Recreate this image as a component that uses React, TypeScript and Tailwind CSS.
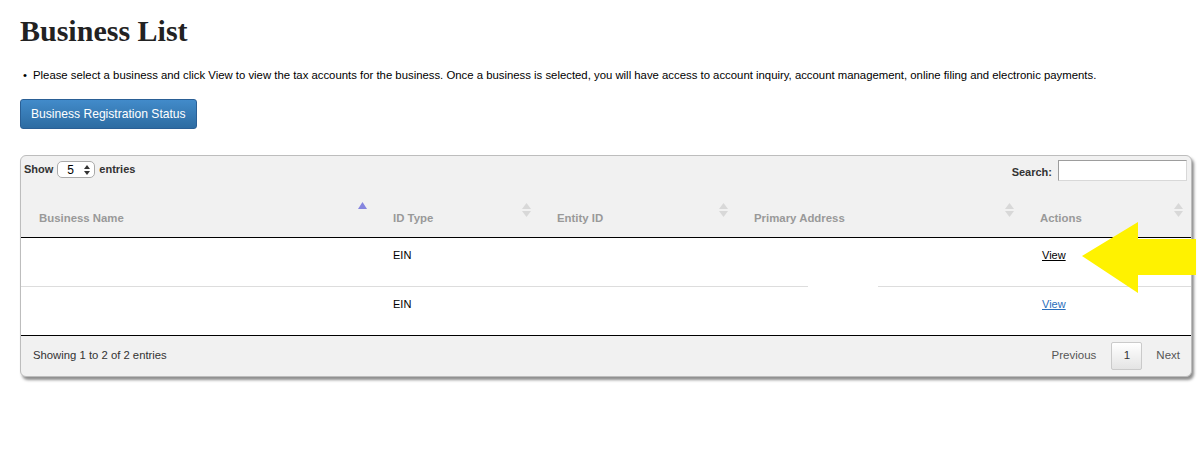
import React from 'react';

const cols = [
  { label: 'Business Name', w: 'w-[354px]', sort: 'asc' },
  { label: 'ID Type', w: 'w-[164px]', sort: 'both' },
  { label: 'Entity ID', w: 'w-[197px]', sort: 'both' },
  { label: 'Primary Address', w: 'w-[286px]', sort: 'both' },
  { label: 'Actions', w: 'w-[169px]', sort: 'both' },
];

const rows = [
  { idType: 'EIN' },
  { idType: 'EIN' },
];

function SortIcon({ kind }: { kind: string }) {
  if (kind === 'asc') {
    return (
      <svg width="9" height="8" viewBox="0 0 9 8" className="absolute right-[8px] top-[10px]">
        <polygon points="4.5,0 9,7 0,7" fill="#8585df" />
      </svg>
    );
  }
  return (
    <svg width="9" height="14" viewBox="0 0 9 14" className="absolute right-[8px] top-[11px]">
      <polygon points="4.5,0 9,6 0,6" fill="#d8d8d8" />
      <polygon points="0,8 9,8 4.5,14" fill="#d8d8d8" />
    </svg>
  );
}

export default function App() {
  return (
    <div className="relative min-h-[450px] bg-white text-[#222] font-['Liberation_Sans',Arial,sans-serif]">
      <div className="px-[20px] pt-[14px]">
        <h1 className="font-['Liberation_Serif','Times_New_Roman',serif] font-bold text-[30px] leading-[34px] text-[#222]">
          Business List
        </h1>

        <ul className="mt-[20px] text-[11.35px] leading-[14px] text-black">
          <li className="flex gap-[6px] pl-[3px]">
            <span>•</span>
            <span>
              Please select a business and click View to view the tax accounts for the business. Once a business is selected, you will have access to account inquiry, account management, online filing and electronic payments.
            </span>
          </li>
        </ul>

        <button className="mt-[17px] h-[30px] px-[10px] rounded-[3px] border border-[#2a5f95] bg-gradient-to-b from-[#428bca] to-[#2d6ca2] text-white text-[12.1px] leading-[15px]">
          Business Registration Status
        </button>

        {/* data table card */}
        <div className="mt-[26px] w-[1172px] rounded-[6px] border border-[#bdbdbd] bg-[#f1f1f1] shadow-[2px_3px_3px_rgba(0,0,0,0.45)] overflow-hidden">
          <div className="flex justify-between items-start pl-[3px] pr-[4px] pt-[4px] h-[36px]">
            <div className="flex items-center gap-[4px] text-[11px] font-bold text-[#333] mt-[1px]">
              <span>Show</span>
              <div className="flex items-center justify-between w-[38px] h-[17px] rounded-[5px] border border-[#aaa] bg-white pl-[9px] pr-[4px] font-normal text-[12px] text-black">
                <span>5</span>
                <svg width="6" height="10" viewBox="0 0 6 10">
                  <polygon points="3,0 6,4 0,4" fill="#333" />
                  <polygon points="0,6 6,6 3,10" fill="#333" />
                </svg>
              </div>
              <span>entries</span>
            </div>
            <div className="flex items-center gap-[6px] text-[11px] font-bold text-[#333]">
              <span className="mt-[3px]">Search:</span>
              <div className="w-[129px] h-[21px] bg-white border border-[#9d9d9d] border-b-[#d8d8d8] border-r-[#d8d8d8]" />
            </div>
          </div>

          <table className="w-full border-collapse table-fixed">
            <thead>
              <tr className="h-[45px]">
                {cols.map((c) => (
                  <th
                    key={c.label}
                    className={`${c.w} relative text-left align-bottom pl-[18px] pb-[9px] text-[11.4px] font-bold text-[#999] border-b border-black`}
                  >
                    {c.label}
                    <SortIcon kind={c.sort} />
                  </th>
                ))}
              </tr>
            </thead>
            <tbody className="bg-white text-[11px] text-black">
              {rows.map((r, i) => (
                <tr key={i} className={`h-[49px] ${i === 0 ? 'border-b border-[#ddd]' : 'border-b border-black'}`}>
                  <td className="align-top pl-[18px] pt-[9px]" />
                  <td className="align-top pl-[18px] pt-[9px]">{r.idType}</td>
                  <td className="align-top pl-[18px] pt-[9px]" />
                  <td className="align-top pl-[18px] pt-[9px]" />
                  <td className="align-top pl-[20px] pt-[9px]">
                    <a href="#" className={`underline ${i === 0 ? 'text-black' : 'text-[#2a6ebb]'}`}>View</a>
                  </td>
                </tr>
              ))}
            </tbody>
          </table>

          <div className="flex justify-between items-center h-[40px] pl-[12px] pr-[11px] text-[11.3px] text-[#333]">
            <span>Showing 1 to 2 of 2 entries</span>
            <div className="flex items-center text-[11.5px] text-[#555]">
              <span className="mr-[15px]">Previous</span>
              <span className="flex items-center justify-center w-[31px] h-[28px] border border-[#cacaca] rounded-[2px] bg-gradient-to-b from-white to-[#e4e4e4] text-[#333]">1</span>
              <span className="ml-[14px]">Next</span>
            </div>
          </div>
        </div>
      </div>

      {/* redaction patch over the row divider */}
      <div className="absolute left-[808px] top-[284px] w-[70px] h-[5px] bg-white" />

      {/* yellow callout arrow */}
      <svg className="absolute left-[1080px] top-[220px]" width="119" height="76" viewBox="0 0 119 76">
        <polygon points="2,36 58,2 58,19 116,19 116,55 58,55 58,73" fill="#fff200" />
      </svg>
    </div>
  );
}
